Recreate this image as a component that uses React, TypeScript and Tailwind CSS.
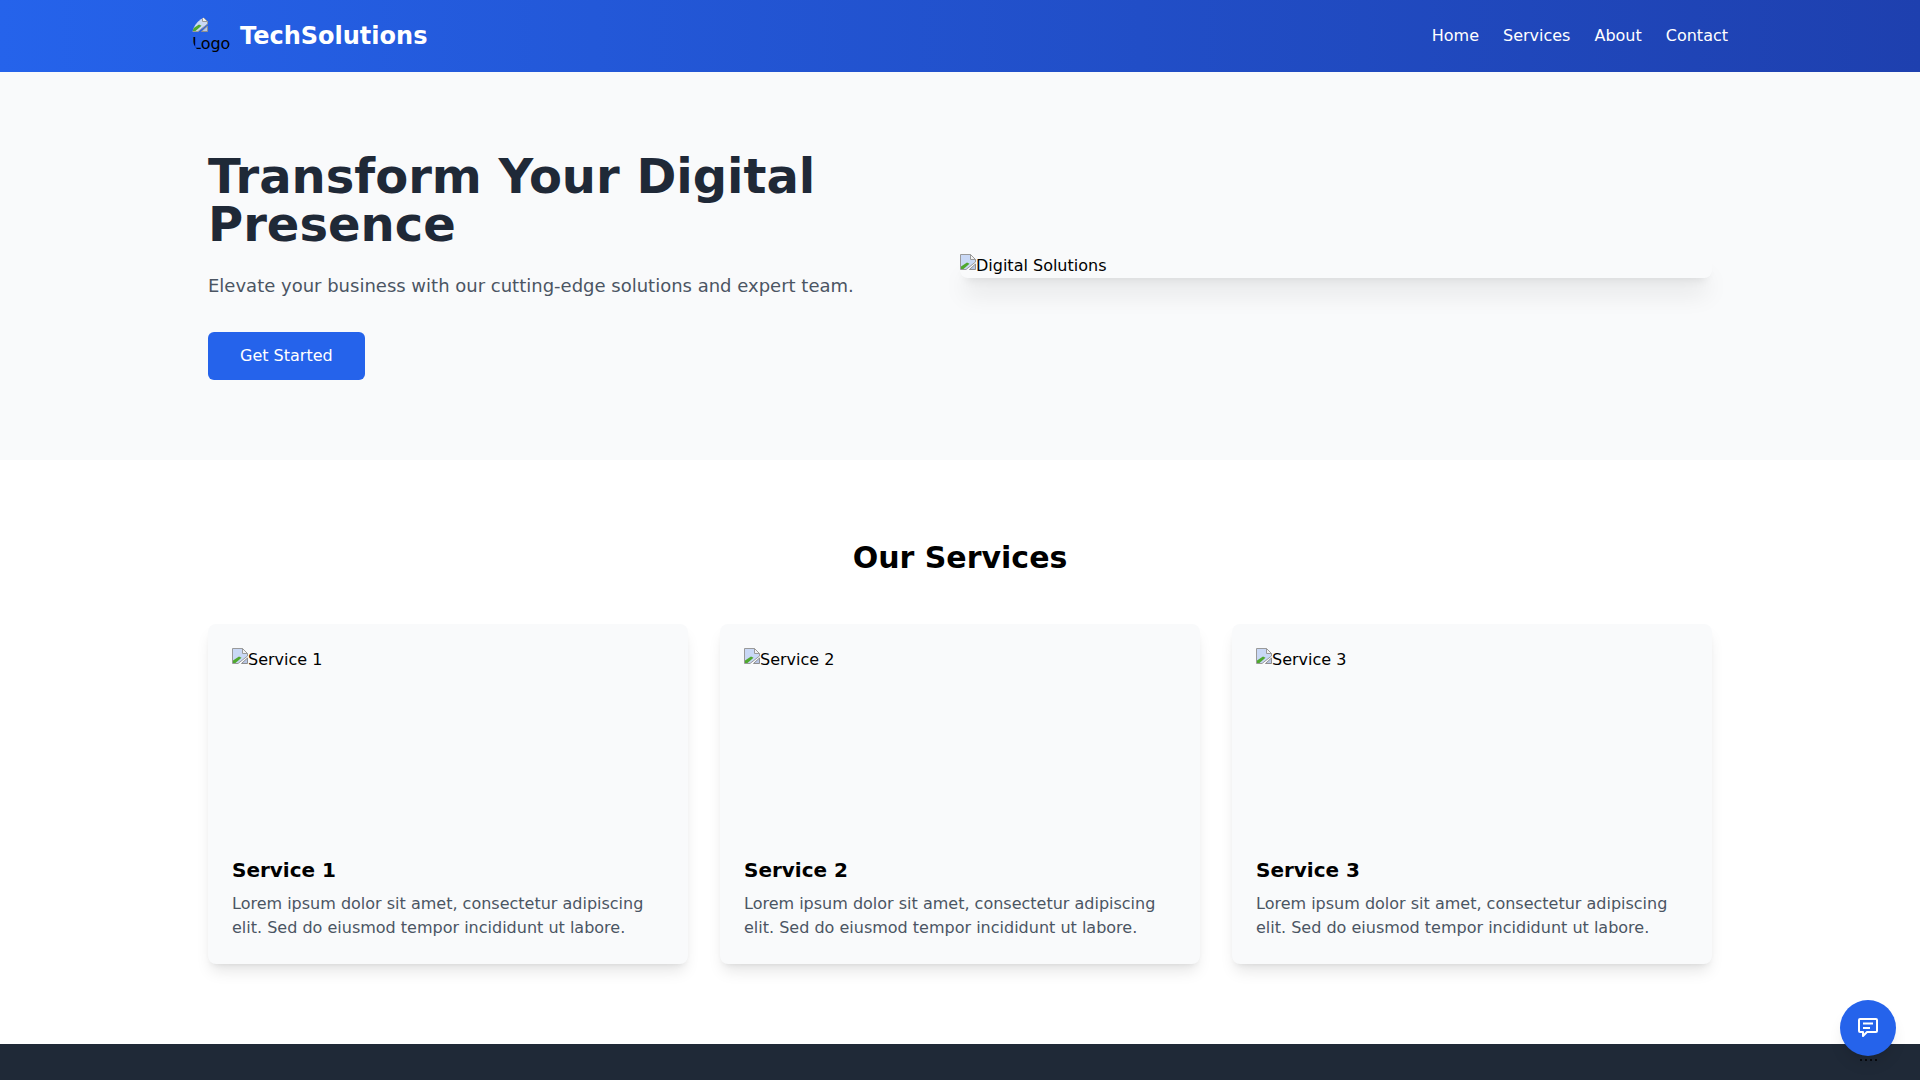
const sans = "font-['DejaVu_Sans',sans-serif]";

function BrokenImage({ alt }: { alt: string }) {
  return (
    <>
      <svg width="16" height="16" viewBox="0 0 16 16" className="float-left">
        <path d="M0.5 0.5H10.5L15.5 5.5V8L6 15.5H0.5Z" fill="#c9d8f5" stroke="#9a9a9a" />
        <path d="M1 15V12.5L7 8.5L9.5 9.8L3.5 15Z" fill="#4fa82e" />
        <path d="M15.5 10V15.5H9.5Z" fill="#b8c6e6" stroke="#8f8f8f" />
        <path d="M10.5 0.5V5.5H15.5Z" fill="#f2f2f2" stroke="#9a9a9a" />
      </svg>
      {alt}
    </>
  );
}

function ServiceCard({ title }: { title: string }) {
  return (
    <div className="rounded-lg bg-[#f9fafb] p-6 shadow-lg">
      <div className="mb-4 h-48 text-base text-black">
        <BrokenImage alt={title} />
      </div>
      <h3 className="mb-2 text-xl leading-7 font-bold text-black">{title}</h3>
      <p className="text-base leading-6 text-[#4b5563]">
        Lorem ipsum dolor sit amet, consectetur adipiscing elit. Sed do eiusmod tempor incididunt ut labore.
      </p>
    </div>
  );
}

export default function App() {
  return (
    <div className={`${sans} h-[1080px] overflow-hidden bg-white`}>
      <header className="h-[72px] bg-gradient-to-r from-[#2563eb] to-[#1e40af]">
        <div className="mx-auto flex h-full w-[1536px] items-center justify-between">
          <div className="flex items-center gap-2">
            <div className="h-10 w-10 overflow-hidden rounded-full text-base leading-6 text-black">
              <BrokenImage alt="Logo" />
            </div>
            <span className="text-2xl font-bold text-white">TechSolutions</span>
          </div>
          <nav className="flex gap-6 text-base text-white">
            <a>Home</a>
            <a>Services</a>
            <a>About</a>
            <a>Contact</a>
          </nav>
        </div>
      </header>

      <section className="bg-[#f9fafb] px-[208px] py-16">
        <div className="grid h-[260px] grid-cols-2 items-center">
          <div>
            <h1 className="mb-6 text-5xl leading-[48px] font-bold text-[#1f2937]">
              Transform Your Digital Presence
            </h1>
            <p className="mb-8 text-lg leading-7 text-[#4b5563]">
              Elevate your business with our cutting-edge solutions and expert team.
            </p>
            <button className="rounded-md bg-[#2563eb] px-8 py-3 text-base text-white">Get Started</button>
          </div>
          <div className="rounded-lg text-base text-black shadow-xl">
            <BrokenImage alt="Digital Solutions" />
          </div>
        </div>
      </section>

      <section className="px-[208px] py-20">
        <h2 className="mb-12 text-center text-3xl leading-9 font-bold text-black">Our Services</h2>
        <div className="grid grid-cols-3 gap-8">
          <ServiceCard title="Service 1" />
          <ServiceCard title="Service 2" />
          <ServiceCard title="Service 3" />
        </div>
      </section>

      <footer className="h-20 bg-[#1f2937]" />

      <div className="fixed right-6 bottom-6">
        <button className="flex h-14 w-14 items-center justify-center rounded-full bg-[#2563eb] shadow-lg">
          <svg width="24" height="24" viewBox="0 0 24 24" fill="none" stroke="#fff" strokeWidth="2" strokeLinejoin="round">
            <path d="M4 3H20a1 1 0 0 1 1 1V15a1 1 0 0 1-1 1H11L7 20V16H4a1 1 0 0 1-1-1V4a1 1 0 0 1 1-1Z" />
            <path d="M7 7.5H17M7 12H14" />
          </svg>
        </button>
        <div className="absolute top-[59px] left-5 flex gap-[3px]">
          <span className="h-[2px] w-[2px] rounded-full bg-black" />
          <span className="h-[2px] w-[2px] rounded-full bg-black" />
          <span className="h-[2px] w-[2px] rounded-full bg-black" />
          <span className="h-[2px] w-[2px] rounded-full bg-black" />
        </div>
      </div>
    </div>
  );
}
